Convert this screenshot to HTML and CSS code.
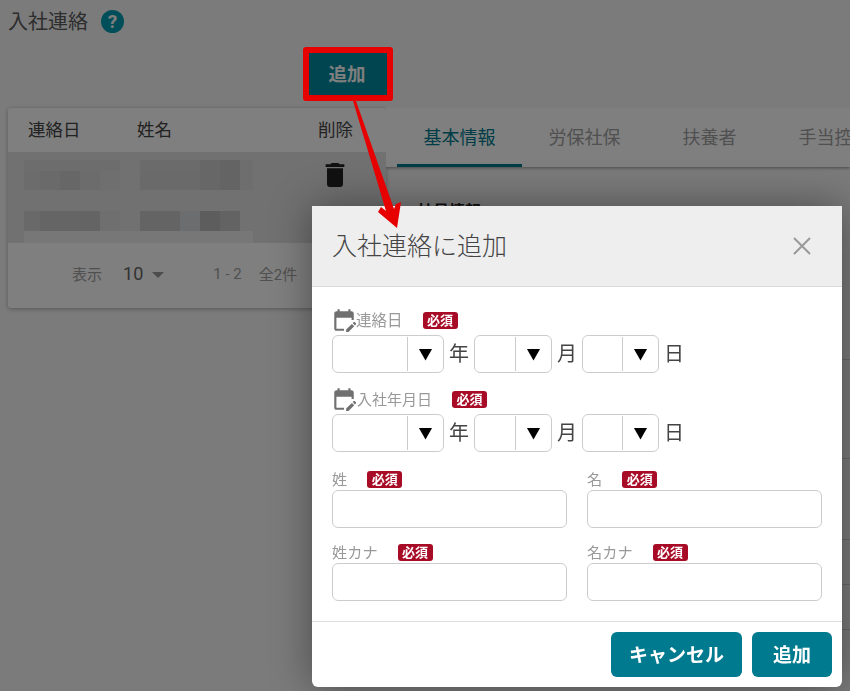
FILE: index.html
```html
<!DOCTYPE html>
<html lang="ja">
<head>
  <meta charset="UTF-8">
  <title>入社連絡</title>
  <link rel="stylesheet" href="styles.css">
</head>
<body>

  <svg class="icon-defs" width="0" height="0">
    <symbol id="edit-calendar" viewBox="0 0 24 24">
      <path d="M5 10h14v2h2V6c0-1.1-.9-2-2-2h-1V2h-2v2H8V2H6v2H5C3.9 4 3.01 4.9 3.01 6L3 20c0 1.1.89 2 2 2h7v-2H5V10z"/>
      <path d="M22.84 16.28l-.71.71-2.12-2.12.71-.71c.39-.39 1.02-.39 1.41 0l.71.71c.39.39.39 1.02 0 1.41zM19.3 15.58l2.12 2.12-5.3 5.3H14v-2.12l5.3-5.3z"/>
    </symbol>
  </svg>

  <div class="page">
    <div class="page-title">
      <h1>入社連絡</h1>
      <span class="help-icon">?</span>
    </div>

    <div class="actions">
      <button class="add-btn">追加</button>
    </div>

    <div class="columns">
      <div class="list-card">
        <div class="list-head">
          <span>連絡日</span>
          <span>姓名</span>
          <span>削除</span>
        </div>
        <div class="list-body">
          <div class="list-row">
            <div class="blur blur-date-1"></div>
            <div class="blur blur-name-1"></div>
            <svg class="trash" viewBox="0 0 24 24"><path d="M6 19c0 1.1.9 2 2 2h8c1.1 0 2-.9 2-2V7H6v12zM19 4h-3.5l-1-1h-5l-1 1H5v2h14V4z"/></svg>
          </div>
          <div class="list-row list-row-low">
            <div class="blur blur-date-2"></div>
            <div class="blur blur-name-2"></div>
          </div>
          <div class="blur-strip"></div>
        </div>
        <div class="list-foot">
          <span class="foot-label">表示</span>
          <span class="foot-size">10</span>
          <span class="foot-caret"></span>
          <span class="foot-range">1 - 2</span>
          <span class="foot-total">全2件</span>
        </div>
      </div>

      <div class="detail">
        <div class="tabs">
          <div class="tab active">基本情報</div>
          <div class="tab">労保社保</div>
          <div class="tab">扶養者</div>
          <div class="tab">手当控除</div>
        </div>
        <h2 class="detail-title">社員情報</h2>
        <div class="detail-rows">
          <div class="detail-row row-a"></div>
          <div class="detail-row row-b"></div>
          <div class="detail-row row-c"></div>
          <div class="detail-row row-d"></div>
          <div class="detail-row row-d"></div>
        </div>
      </div>
    </div>
  </div>

  <div class="overlay"></div>

  <div class="modal">
    <div class="modal-header">
      <div class="modal-title">入社連絡に追加</div>
      <svg class="modal-close" viewBox="0 0 18 18"><path d="M1 1l16 16M17 1L1 17"/></svg>
    </div>

    <div class="modal-body">
      <div class="field-label date-label">
        <svg class="calendar"><use href="#edit-calendar"/></svg>
        <span>連絡日</span>
        <span class="required">必須</span>
      </div>
      <div class="date-row">
        <div class="date-select year"><select></select><span class="arrow">▼</span></div>
        <span class="suffix">年</span>
        <div class="date-select month"><select></select><span class="arrow">▼</span></div>
        <span class="suffix">月</span>
        <div class="date-select day"><select></select><span class="arrow">▼</span></div>
        <span class="suffix">日</span>
      </div>

      <div class="field-label date-label second">
        <svg class="calendar"><use href="#edit-calendar"/></svg>
        <span>入社年月日</span>
        <span class="required">必須</span>
      </div>
      <div class="date-row">
        <div class="date-select year"><select></select><span class="arrow">▼</span></div>
        <span class="suffix">年</span>
        <div class="date-select month"><select></select><span class="arrow">▼</span></div>
        <span class="suffix">月</span>
        <div class="date-select day"><select></select><span class="arrow">▼</span></div>
        <span class="suffix">日</span>
      </div>

      <div class="name-grid">
        <div>
          <div class="field-label"><span>姓</span><span class="required">必須</span></div>
          <input type="text">
        </div>
        <div>
          <div class="field-label"><span>名</span><span class="required">必須</span></div>
          <input type="text">
        </div>
        <div>
          <div class="field-label"><span>姓カナ</span><span class="required">必須</span></div>
          <input type="text">
        </div>
        <div>
          <div class="field-label"><span>名カナ</span><span class="required">必須</span></div>
          <input type="text">
        </div>
      </div>
    </div>

    <div class="modal-footer">
      <button class="modal-btn">キャンセル</button>
      <button class="modal-btn add">追加</button>
    </div>
  </div>

  <!-- red callout drawn on top of the screenshot -->
  <div class="callout-frame"></div>
  <svg class="callout-arrow" viewBox="0 0 850 691">
    <path d="M353 101L356 101L394 209L396 204L401 202L397 228L378 212L381 207L386 211Z"/>
  </svg>

</body>
</html>
```

FILE: styles.css
```css
* {
  box-sizing: border-box;
}
html, body {
  height: 100%;
}
body {
  margin: 0;
  overflow: hidden;
  background: #f6f6f6;
  font-family: Roboto, "Noto Sans CJK JP", sans-serif;
  color: #444;
}
.icon-defs {
  position: absolute;
}

/* page behind the dialog */
.page {
  padding: 0 0 0 8px;
}
.page-title {
  display: flex;
  align-items: center;
  height: 44px;
}
.page-title h1 {
  margin: 0 0 4px;
  font-size: 20px;
  font-weight: 400;
  color: #5a5a5a;
}
.help-icon {
  width: 23px;
  height: 23px;
  margin: 0 0 2px 13px;
  border-radius: 50%;
  background: #009db2;
  color: #fff;
  font-size: 19px;
  font-weight: 700;
  line-height: 23px;
  text-align: center;
}
.actions {
  display: flex;
  justify-content: flex-end;
  width: 379px;
  margin-top: 9px;
  margin-bottom: 13px;
}
.add-btn {
  width: 78px;
  height: 42px;
  padding: 0 2px 3px 0;
  border: none;
  background: #008a9e;
  color: #fff;
  font-family: inherit;
  font-size: 18.5px;
  font-weight: 700;
}
.columns {
  display: flex;
  align-items: flex-start;
}
.list-card {
  flex: none;
  width: 378px;
  background: #fff;
  border-radius: 3px;
  box-shadow: 0 1px 4px rgba(0,0,0,0.3);
}
.list-head {
  display: grid;
  grid-template-columns: 109px 181px auto;
  align-items: center;
  height: 44px;
  padding: 0 0 3px 20px;
  font-size: 17.5px;
  color: #444;
}
.list-body {
  height: 91px;
  padding-top: 8px;
  background: #e2e2e2;
}
.list-row {
  display: flex;
  align-items: flex-start;
  height: 51px;
  padding-left: 16px;
}
.list-row-low {
  height: 20px;
}
.blur {
  flex: none;
  height: 30px;
}
.blur-date-1 {
  width: 96px;
  margin-right: 20px;
  background:
    linear-gradient(#dadada 11px, transparent 11px),
    linear-gradient(to right, #d8d8d8 16px, #d4d4d4 16px, #d4d4d4 36px, #cecece 36px, #cecece 56px, #d8d8d8 56px, #d8d8d8 76px, #dedede 76px);
}
.blur-name-1 {
  width: 113px;
  background:
    linear-gradient(to right, #d6d6d6 60px, transparent 60px) top left / 113px 11px no-repeat,
    linear-gradient(to right, #d4d4d4 60px, #cecece 60px, #cecece 80px, #c8c8c8 80px, #c8c8c8 100px, #dcdcdc 100px);
}
.trash {
  width: 32px;
  height: 32px;
  margin-top: -1px;
  margin-left: 66px;
  fill: #222;
}
.blur-date-2 {
  width: 96px;
  height: 20px;
  margin-right: 20px;
  background: linear-gradient(to right, #d2d2d2 16px, #cacaca 16px, #cacaca 56px, #c8c8c8 56px, #c8c8c8 76px, #dedede 76px);
}
.blur-name-2 {
  width: 100px;
  height: 20px;
  background: linear-gradient(to right, #c8c8c8 40px, #d8dadc 40px, #d8dadc 60px, #bababa 60px, #bababa 80px, #c6c6c6 80px);
}
.blur-strip {
  width: 229px;
  height: 12px;
  margin-left: 16px;
  background: #eeeeee;
}
.list-foot {
  display: flex;
  align-items: center;
  height: 65px;
  padding: 0 0 4px 64px;
  font-size: 15px;
  color: #a0a0a0;
}
.foot-size {
  margin-left: 21px;
  font-size: 18px;
  color: #666;
}
.foot-caret {
  width: 0;
  height: 0;
  margin-left: 9px;
  margin-top: 3px;
  border-left: 6px solid transparent;
  border-right: 6px solid transparent;
  border-top: 6px solid #999;
}
.foot-range {
  margin-left: 49px;
}
.foot-total {
  margin-left: 17px;
}
.detail {
  flex: 1;
  min-width: 0;
  overflow: hidden;
}
.tabs {
  display: flex;
  height: 59px;
  padding-left: 11px;
  background: #fff;
  box-shadow: 0 1px 3px rgba(0,0,0,0.4);
}
.tab {
  flex: none;
  width: 125px;
  height: 59px;
  font-size: 18px;
  line-height: 59px;
  text-align: center;
  color: #a0a0a0;
}
.tab.active {
  color: #007a8e;
  border-bottom: 3px solid #007a8e;
}
.detail-title {
  margin: 33px 0 0 31px;
  font-size: 16px;
  font-weight: 700;
  line-height: 24px;
  color: #222;
}
.detail-rows {
  margin-top: 23px;
}
.detail-row {
  border-bottom: 1px solid #d0d0d0;
}
.row-a {
  height: 113px;
}
.row-b {
  height: 99px;
}
.row-c {
  height: 81px;
}
.row-d {
  height: 45px;
}

.overlay {
  position: fixed;
  inset: 0;
  background: rgba(0,0,0,0.5);
}

/* dialog */
.modal {
  position: absolute;
  left: 312px;
  top: 206px;
  width: 530px;
  height: 481px;
  background: #fff;
  border-radius: 0 0 6px 6px;
  box-shadow: 0 0 40px rgba(0,0,0,0.4);
  color: #333;
}
.modal-header {
  display: flex;
  align-items: center;
  justify-content: space-between;
  height: 81px;
  padding: 0 31px 0 20px;
  background: #eee;
  border-bottom: 1px solid #d9d9d9;
}
.modal-title {
  margin-bottom: 5px;
  font-size: 25px;
  font-weight: 300;
  color: #444;
}
.modal-close {
  width: 18px;
  height: 18px;
  fill: none;
  stroke: #999;
  stroke-width: 2;
}
.modal-body {
  height: 334px;
  padding: 22px 20px 0;
}
.field-label {
  display: flex;
  align-items: center;
  height: 18px;
  margin-bottom: 2px;
  font-size: 15.2px;
  color: #999;
}
.field-label > span:first-of-type {
  margin-bottom: 2px;
}
.date-label {
  height: 22px;
  margin-bottom: 4px;
  font-size: 15.5px;
}
.date-label.second {
  margin-top: 15px;
  font-size: 15px;
}
.calendar {
  flex: none;
  width: 26px;
  height: 26px;
  margin-left: -1px;
  margin-right: -1px;
  fill: #707070;
}
.date-label.second .calendar {
  margin-right: 0;
}
.required {
  flex: none;
  width: 35px;
  height: 17px;
  margin-left: 20px;
  background: #a80b26;
  border-radius: 3px;
  color: #fff;
  font-size: 13px;
  font-weight: 700;
  line-height: 17px;
  text-align: center;
}
.date-row {
  display: flex;
  align-items: center;
  height: 38px;
}
.date-select {
  display: flex;
  flex: none;
  height: 38px;
  padding: 1px 0;
  border: 1px solid #ccc;
  border-radius: 6px;
  background: #fff;
}
.date-select select {
  flex: 1;
  min-width: 0;
  border: none;
  border-right: 1px solid #ccc;
  background: transparent;
  appearance: none;
}
.date-select.year {
  width: 112px;
}
.date-select.month {
  width: 78px;
}
.date-select.day {
  width: 77px;
}
.arrow {
  flex: none;
  width: 35px;
  color: #000;
  font-size: 14px;
  line-height: 34px;
  text-align: center;
}
.suffix {
  flex: none;
  width: 30px;
  padding-bottom: 4px;
  font-size: 20px;
  text-align: center;
  color: #444;
}
.name-grid {
  display: grid;
  grid-template-columns: 235px 235px;
  column-gap: 20px;
  row-gap: 15px;
  margin-top: 18px;
}
.name-grid input {
  display: block;
  width: 100%;
  height: 38px;
  border: 1px solid #ccc;
  border-radius: 6px;
  background: #fff;
}
.modal-footer {
  display: flex;
  justify-content: flex-end;
  gap: 10px;
  padding: 10px;
  border-top: 1px solid #ddd;
}
.modal-btn {
  width: 131px;
  height: 45px;
  padding: 0 0 2px;
  border: none;
  border-radius: 6px;
  background: #007a8e;
  color: #fff;
  font-family: inherit;
  font-size: 19px;
  font-weight: 700;
}
.modal-btn.add {
  width: 80px;
}

/* callout */
.callout-frame {
  position: absolute;
  left: 303px;
  top: 47px;
  width: 90px;
  height: 54px;
  border: 6px solid #e60000;
  border-radius: 3px;
}
.callout-arrow {
  position: absolute;
  left: 0;
  top: 0;
  width: 850px;
  height: 691px;
  fill: #e60000;
  pointer-events: none;
}
```
